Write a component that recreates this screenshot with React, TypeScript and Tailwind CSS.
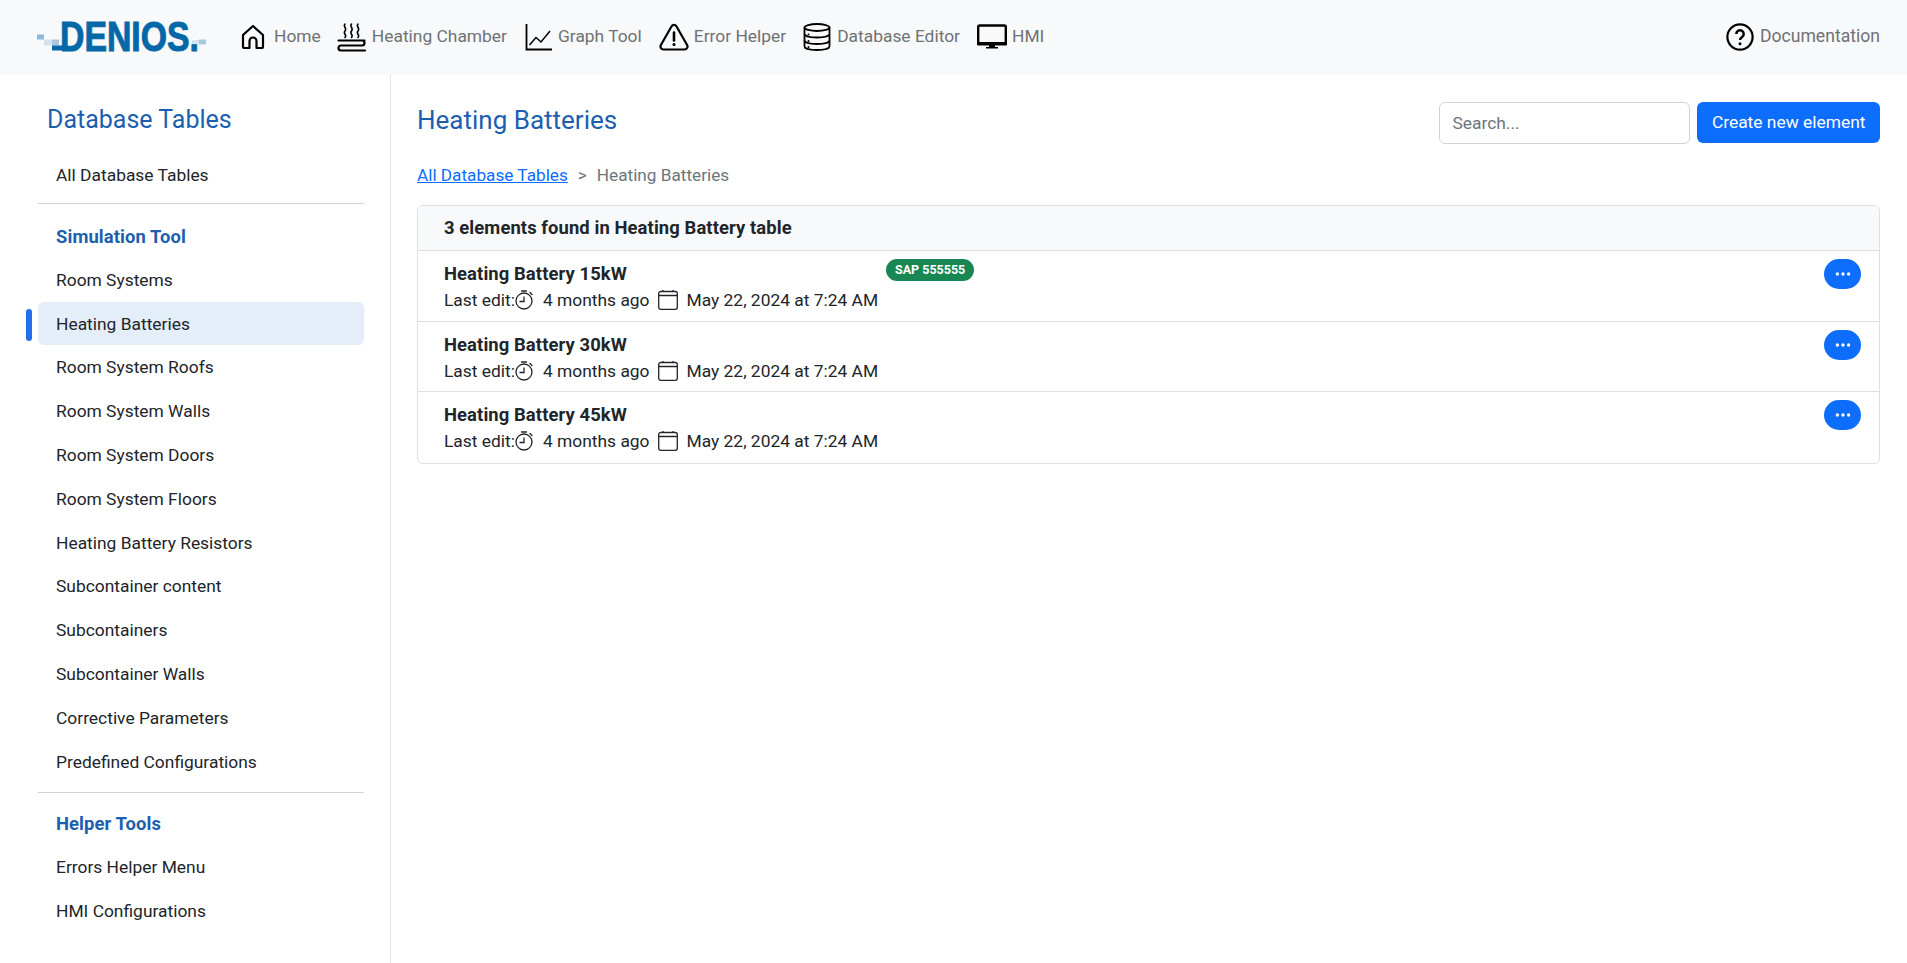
import { BsThreeDots } from "react-icons/bs"

const font = { fontFamily: "Roboto, 'Open Sans', sans-serif" }

const LogoMark = () => (
  <svg width="172" height="40" viewBox="0 0 172 40" className="shrink-0 overflow-visible">
    <rect x="1" y="16.500" width="7" height="5" fill="#8fb8d8" />
    <rect x="8" y="21.500" width="8" height="6" fill="#d3e3ef" />
    <rect x="16" y="21.500" width="7" height="6" fill="#a9c8e0" />
    <rect x="16" y="27.500" width="12" height="5" fill="#0468a8" />
    <text
      x="24"
      y="32.500"
      textLength="139"
      lengthAdjust="spacingAndGlyphs"
      fontFamily="'Liberation Sans', sans-serif"
      fontWeight="700"
      fontSize="42"
      fill="#0468a8"
      stroke="#0468a8"
      strokeWidth="1"
    >
      DENIOS.
    </text>
    <rect x="156" y="22" width="7" height="4" fill="#d3e3ef" />
    <rect x="163" y="21.500" width="7" height="5" fill="#a9c8e0" />
  </svg>
)

const HomeIcon = () => (
  <svg width="24" height="26" viewBox="0 0 24 26" fill="none" stroke="#000" strokeWidth="2.200" strokeLinejoin="round">
    <path d="M12 2 2 11v11.500A1.500 1.500 0 0 0 3.500 24H8.500v-7a3.500 3.500 0 0 1 7 0v7h5a1.500 1.500 0 0 0 1.500-1.500V11z" />
  </svg>
)

const HeatIcon = () => (
  <svg width="30" height="30" viewBox="0 0 30 30" fill="none" stroke="#000" strokeLinecap="round">
    <path d="M8 1c-2.500 2.500 2.500 4 0 7s2.500 3.500 0 6.500M14.500 1c-2.500 2.500 2.500 4 0 7s2.500 3.500 0 6.500M21 1c-2.500 2.500 2.500 4 0 7s2.500 3.500 0 6.500" strokeWidth="1.600" />
    <path d="M1.500 17.500h26M24 17.500h1a2.500 2.500 0 0 1 0 5H4a2.500 2.500 0 0 0 0 5h24" strokeWidth="2.200" />
  </svg>
)

const GraphIcon = () => (
  <svg width="28" height="28" viewBox="0 0 28 28" fill="none" stroke="#000" strokeWidth="1.800">
    <path d="M1.500 1v25.500H27" />
    <path d="M4.500 22 11 14.500l5 4.500 9-11" strokeWidth="1.500" />
  </svg>
)

const WarnIcon = () => (
  <svg width="30" height="28" viewBox="0 0 30 28" fill="none" stroke="#000" strokeWidth="2.200" strokeLinecap="round" strokeLinejoin="round">
    <path d="M12.600 3.200 1.900 22a3 3 0 0 0 2.600 4.500h21a3 3 0 0 0 2.600-4.500L17.400 3.200a2.800 2.800 0 0 0-4.800 0z" />
    <path d="M15 9.500v8" strokeWidth="2.600" />
    <circle cx="15" cy="21.500" r="0.700" fill="#000" strokeWidth="1.800" />
  </svg>
)

const DbIcon = () => (
  <svg width="28" height="28" viewBox="0 0 28 28" fill="none" stroke="#000" strokeWidth="1.800">
    <ellipse cx="14" cy="4.500" rx="12.500" ry="3.500" />
    <path d="M1.500 4.500v19c0 2 5.600 3.500 12.500 3.500s12.500-1.500 12.500-3.500v-19" />
    <path d="M1.500 11c0 2 5.600 3.500 12.500 3.500S26.500 13 26.500 11M1.500 17.500c0 2 5.600 3.500 12.500 3.500s12.500-1.500 12.500-3.500" />
    <circle cx="5.500" cy="11.500" r="1" fill="#000" stroke="none" />
    <circle cx="5.500" cy="18" r="1" fill="#000" stroke="none" />
    <circle cx="5.500" cy="24" r="1" fill="#000" stroke="none" />
  </svg>
)

const ScreenIcon = () => (
  <svg width="30" height="26" viewBox="0 0 30 26" fill="none">
    <rect x="1.200" y="1.500" width="27.600" height="18" rx="1.500" stroke="#000" strokeWidth="2.400" />
    <rect x="0" y="18" width="30" height="3.500" rx="1" fill="#000" />
    <rect x="12" y="21" width="6" height="2.500" fill="#000" />
    <rect x="9" y="23" width="12" height="1.500" fill="#000" />
  </svg>
)

const HelpIcon = () => (
  <svg width="28" height="28" viewBox="0 0 28 28" fill="none">
    <circle cx="14" cy="14" r="12.600" stroke="#000" strokeWidth="2.200" />
    <path d="M10.300 11a3.700 3.700 0 1 1 5.800 3c-1.300.9-2.100 1.500-2.100 3" stroke="#000" strokeWidth="2.500" fill="none" />
    <circle cx="14" cy="20.700" r="1.500" fill="#000" />
  </svg>
)

const TimerIcon = () => (
  <svg width="20" height="20" viewBox="0 0 20 20" fill="none" stroke="#212529" strokeWidth="1.300">
    <circle cx="10" cy="11" r="8" />
    <path d="M10 6.500V11.500H5.500" />
    <path d="M7.500 1h5M16 2.500l2 2" strokeLinecap="round" />
  </svg>
)

const CalIcon = () => (
  <svg width="20" height="20" viewBox="0 0 20 20" fill="none" stroke="#212529" strokeWidth="1.300">
    <rect x="0.700" y="1.500" width="18.600" height="17.800" rx="2" />
    <path d="M0.700 5.500h18.600M5 0v1.500M15 0v1.500" />
  </svg>
)

const navLinks = [
  { label: "Home", icon: <HomeIcon />, gap: "gap-[9px]", ml: "ml-[33px]" },
  { label: "Heating Chamber", icon: <HeatIcon />, gap: "gap-[5px]", ml: "ml-[16px]" },
  { label: "Graph Tool", icon: <GraphIcon />, gap: "gap-[5px]", ml: "ml-[18px]" },
  { label: "Error Helper", icon: <WarnIcon />, gap: "gap-[5px]", ml: "ml-[17px]" },
  { label: "Database Editor", icon: <DbIcon />, gap: "gap-[6px]", ml: "ml-[17px]" },
  { label: "HMI", icon: <ScreenIcon />, gap: "gap-[5px]", ml: "ml-[17px]" },
]

const simulationItems = [
  "Room Systems",
  "Heating Batteries",
  "Room System Roofs",
  "Room System Walls",
  "Room System Doors",
  "Room System Floors",
  "Heating Battery Resistors",
  "Subcontainer content",
  "Subcontainers",
  "Subcontainer Walls",
  "Corrective Parameters",
  "Predefined Configurations",
]

const helperItems = ["Errors Helper Menu", "HMI Configurations"]

const rows = ["Heating Battery 15kW", "Heating Battery 30kW", "Heating Battery 45kW"]

function SideItem({ label, active }: { label: string; active?: boolean }) {
  return (
    <div className="relative">
      {active && <span className="absolute left-[-12px] top-[6px] h-[32px] w-[6px] rounded-full bg-[#1f6fe8]" />}
      <a
        className={`block h-[43.8px] rounded-md px-[18px] text-[17.4px] text-[#212529] ${
          active ? "-translate-y-px bg-[#e4eef9] leading-[45.8px]" : "leading-[43.8px]"
        }`}
      >
        {label}
      </a>
    </div>
  )
}

export default function App() {
  return (
    <div className="flex min-h-[963px] flex-col bg-white text-[17.4px] text-[#212529]" style={font}>
      <nav className="flex h-[75px] shrink-0 items-center bg-[#f8f9fa] pl-[36px] pr-[27px]">
        <LogoMark />
        {navLinks.map((link) => (
          <a key={link.label} className={`flex items-center ${link.gap} ${link.ml} text-[#6f7275]`}>
            {link.icon}
            <span className="pb-[2px]">{link.label}</span>
          </a>
        ))}
        <a className="ml-auto flex items-center gap-[6px] text-[17.6px] text-[#6f7275]">
          <HelpIcon />
          <span className="pb-[2px]">Documentation</span>
        </a>
      </nav>

      <div className="flex flex-1">
        <aside className="w-[391px] shrink-0 border-r border-[#dee2e6] pl-[38px] pr-[26px] pt-[27px]">
          <h5 className="pl-[9px] text-[25px] leading-[36px] text-[#1c5fb0]">Database Tables</h5>
          <div className="mt-[15.500px]">
            <SideItem label="All Database Tables" />
          </div>
          <hr className="mt-[5.500px] border-[#cfd2d6]" />
          <div className="mt-[11px] h-[44px] px-[18px] text-[18.4px] font-bold leading-[44px] tracking-[0.1px] text-[#1c5fb0]">Simulation Tool</div>
          {simulationItems.map((item) => (
            <SideItem key={item} label={item} active={item === "Heating Batteries"} />
          ))}
          <hr className="mt-[8px] border-[#cfd2d6]" />
          <div className="mt-[9px] h-[44px] px-[18px] text-[18.4px] font-bold leading-[44px] tracking-[0.1px] text-[#1c5fb0]">Helper Tools</div>
          {helperItems.map((item) => (
            <SideItem key={item} label={item} />
          ))}
        </aside>

        <main className="min-w-0 flex-1 pl-[26px] pr-[27px] pt-[27px]">
          <div className="flex items-start justify-between">
            <h4 className="text-[26px] leading-[36px] text-[#1c5fb0]">Heating Batteries</h4>
            <div className="flex items-start gap-[7px]">
              <input
                placeholder="Search..."
                className="h-[42px] w-[251px] rounded-md border border-[#ced4da] bg-white px-[12px] text-[17.4px] outline-none placeholder:text-[#6c757d]"
              />
              <button className="h-[41px] rounded-md bg-[#0d6efd] px-[14.500px] text-[17.4px] text-white">Create new element</button>
            </div>
          </div>

          <div className="mt-[19px] flex items-center text-[17.2px] text-[#6c757d]">
            <a className="text-[#0d6efd] underline">All Database Tables</a>
            <span className="px-[10px]">&gt;</span>
            <span>Heating Batteries</span>
          </div>

          <div className="mt-[16px] overflow-hidden rounded-md border border-[#dcdfe3]">
            <div className="h-[45px] border-b border-[#dcdfe3] bg-[#f8f9fa] px-[26px] text-[18.4px] font-bold leading-[44px] tracking-[0.1px]">
              3 elements found in Heating Battery table
            </div>
            {rows.map((row, i) => (
              <div key={row} className="relative flex h-[70.800px] flex-col border-b border-[#dcdfe3] px-[26px] pt-[10px] last:border-b-0">
                <div className="h-[26px] text-[18.4px] font-bold leading-[26px] tracking-[0.1px]">{row}</div>
                <div className="flex h-[26px] items-center">
                  <span>Last edit:</span>
                  <span className="-ml-[1px]">
                    <TimerIcon />
                  </span>
                  <span className="ml-[9px]">4 months ago</span>
                  <span className="ml-[8px]">
                    <CalIcon />
                  </span>
                  <span className="ml-[9px]">May 22, 2024 at 7:24 AM</span>
                </div>
                {i === 0 && (
                  <span className="absolute left-[468px] top-[8px] rounded-full bg-[#198754] px-[9px] py-[3px] text-[12.5px] font-bold leading-[16px] text-white">
                    SAP 555555
                  </span>
                )}
                <button className="absolute right-[18px] top-[8px] flex h-[30px] w-[37px] items-center justify-center rounded-full bg-[#0d6efd] text-[18px] text-white">
                  <BsThreeDots />
                </button>
              </div>
            ))}
          </div>
        </main>
      </div>
    </div>
  )
}
